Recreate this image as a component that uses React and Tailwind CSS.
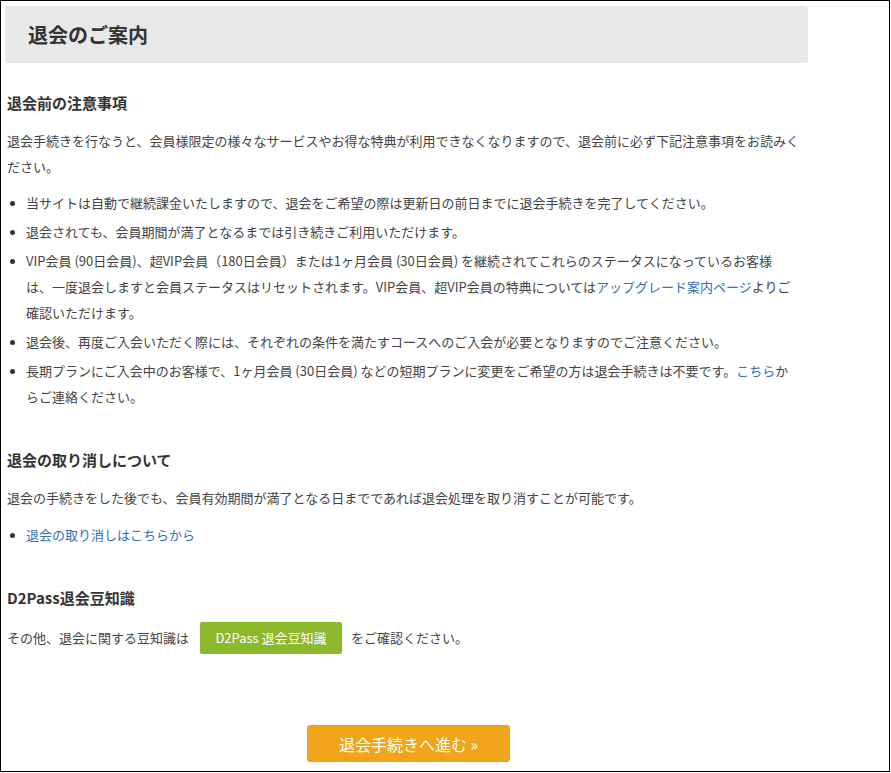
import React from 'react';

const font = { fontFamily: '"Noto Sans CJK JP", "Noto Sans", sans-serif' };

const Bullet = ({ children }) => (
  <li className="flex leading-[26px]">
    <span className="w-[19px] shrink-0 flex items-start pt-[11px] pl-[3px]">
      <span className="block w-[5px] h-[5px] rounded-full bg-[#333]" />
    </span>
    <span>{children}</span>
  </li>
);

const Link = ({ children }) => (
  <a href="#" className="text-[#3470b8]">
    {children}
  </a>
);

const SectionTitle = ({ children }) => (
  <h3 className="text-[15px] font-bold leading-[22px] text-[#333]">{children}</h3>
);

export default function App() {
  return (
    <div className="w-[890px] h-[772px] border border-black bg-white text-[13px] text-[#444]" style={font}>
      <div className="w-[807px] pl-[4px] pt-[5px]">
        {/* page header */}
        <div className="h-[57px] rounded-[3px] bg-[#e8e8e8] flex items-center pl-[23px]">
          <h2 className="text-[20px] font-bold text-[#333]">退会のご案内</h2>
        </div>

        <div className="pl-[2px]">
          {/* before cancel */}
          <section className="mt-[29px]">
            <SectionTitle>退会前の注意事項</SectionTitle>
            <p className="mt-[14px] leading-[26px]">
              退会手続きを行なうと、会員様限定の様々なサービスやお得な特典が利用できなくなりますので、退会前に必ず下記注意事項をお読みく
              <br />
              ださい。
            </p>
            <ul className="mt-[10px] flex flex-col gap-[3px]">
              <Bullet>当サイトは自動で継続課金いたしますので、退会をご希望の際は更新日の前日までに退会手続きを完了してください。</Bullet>
              <Bullet>退会されても、会員期間が満了となるまでは引き続きご利用いただけます。</Bullet>
              <Bullet>
                VIP会員 (90日会員)、超VIP会員（180日会員）または1ヶ月会員 (30日会員) を継続されてこれらのステータスになっているお客様
                <br />
                は、一度退会しますと会員ステータスはリセットされます。VIP会員、超VIP会員の特典については<Link>アップグレード案内ページ</Link>よりご
                <br />
                確認いただけます。
              </Bullet>
              <Bullet>退会後、再度ご入会いただく際には、それぞれの条件を満たすコースへのご入会が必要となりますのでご注意ください。</Bullet>
              <Bullet>
                長期プランにご入会中のお客様で、1ヶ月会員 (30日会員) などの短期プランに変更をご希望の方は退会手続きは不要です。<Link>こちら</Link>か
                <br />
                らご連絡ください。
              </Bullet>
            </ul>
          </section>

          {/* undo cancel */}
          <section className="mt-[39px]">
            <SectionTitle>退会の取り消しについて</SectionTitle>
            <p className="mt-[14px] leading-[26px]">
              退会の手続きをした後でも、会員有効期間が満了となる日までであれば退会処理を取り消すことが可能です。
            </p>
            <ul className="mt-[11px]">
              <Bullet>
                <Link>退会の取り消しはこちらから</Link>
              </Bullet>
            </ul>
          </section>

          {/* tips */}
          <section className="mt-[39px]">
            <SectionTitle>D2Pass退会豆知識</SectionTitle>
            <div className="mt-[13px] flex items-center h-[32px]">
              <span>その他、退会に関する豆知識は</span>
              <a
                href="#"
                className="ml-[11px] mr-[9px] h-[32px] w-[142px] rounded-[2px] bg-[#8cb92b] text-white flex items-center justify-center"
              >
                D2Pass 退会豆知識
              </a>
              <span>をご確認ください。</span>
            </div>
          </section>

          {/* proceed */}
          <div className="mt-[71px] flex justify-center pl-[2px]">
            <button className="w-[203px] h-[37px] rounded-[3px] bg-[#f0a419] text-white text-[16px] flex items-center justify-center">
              退会手続きへ進む »
            </button>
          </div>
        </div>
      </div>
    </div>
  );
}
